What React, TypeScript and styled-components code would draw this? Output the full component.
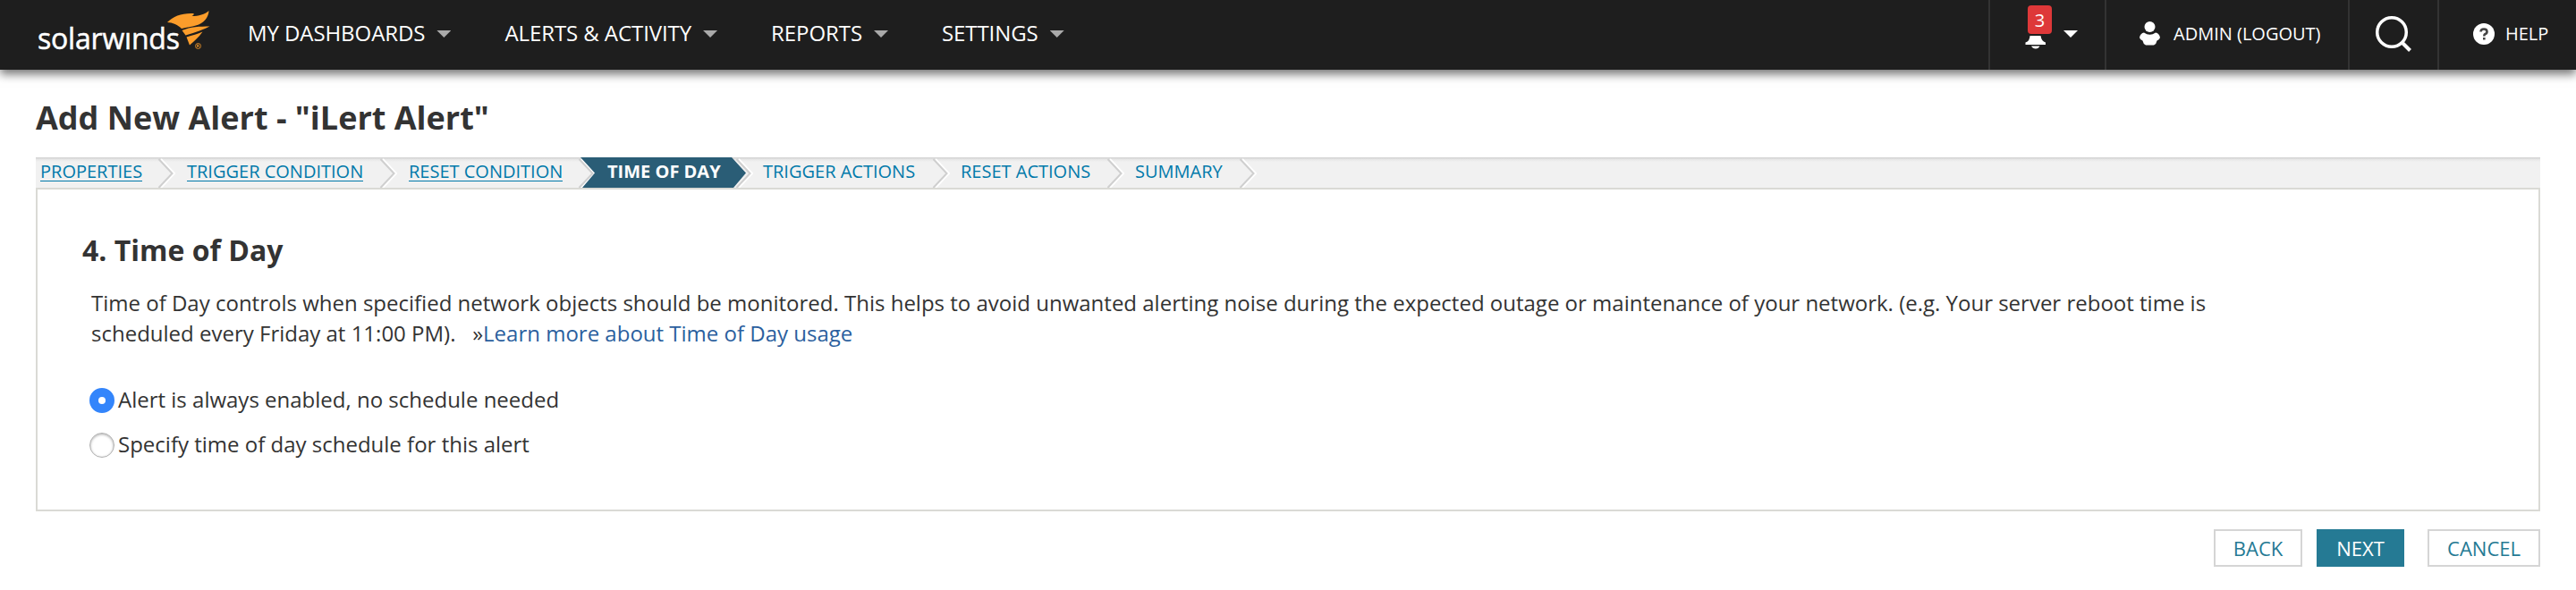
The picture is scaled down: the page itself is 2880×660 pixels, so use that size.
import React from "react";
import styled, { createGlobalStyle } from "styled-components";

const Global = createGlobalStyle`
  * { box-sizing: border-box; }
  body { margin: 0; background: #fff; font-family: "Open Sans", sans-serif; color: #333; }
`;

const Header = styled.header`
  display: flex;
  height: 78px;
  background: #1e1e1e;
  color: #fff;
  box-shadow: 0 5px 10px rgba(0, 0, 0, 0.55);
`;
const Logo = styled.div`
  display: flex;
  width: 277px;
  padding-left: 42px;
`;
const Wordmark = styled.span`
  width: 144px;
  font: 400 32px/40px "Open Sans", sans-serif;
  letter-spacing: -0.2px;
  margin-top: 23px;
  -webkit-text-stroke: 0.5px #fff;
`;
const Bird = styled.svg`
  display: block;
  width: 50px;
  height: 44px;
  margin-top: 12px;
`;
const Nav = styled.nav`
  display: flex;
  flex: 1;
  gap: 60px;
`;
const NavItem = styled.a`
  display: flex;
  align-items: flex-start;
  gap: 13px;
  font-size: 24px;
  line-height: 33px;
  letter-spacing: -0.08px;
  padding-top: 20px;
  white-space: nowrap;
`;
const Caret = styled.i<{ $color: string; $top: number }>`
  width: 16px;
  height: 8px;
  margin-top: ${(p) => p.$top}px;
  background: ${(p) => p.$color};
  clip-path: polygon(0 0, 100% 0, 50% 100%);
`;
const Tool = styled.div<{ $width: number; $left: number }>`
  display: flex;
  align-items: flex-start;
  width: ${(p) => p.$width}px;
  padding-left: ${(p) => p.$left}px;
  border-left: 2px solid #333;
`;
const ToolText = styled.span`
  font-size: 20px;
  line-height: 30px;
  margin-top: 23px;
  white-space: nowrap;
`;
const Notice = styled.div`
  display: flex;
  flex-direction: column;
  width: 30px;
  margin-right: 13px;
`;
const Badge = styled.span`
  width: 27px;
  height: 32px;
  margin: 6px 0 0 3px;
  border-radius: 4px;
  background: #de3839;
  font-size: 20px;
  line-height: 33px;
  text-align: center;
`;
const Icon = styled.svg<{ $w: number; $h: number; $top?: number; $right?: number }>`
  display: block;
  flex: none;
  width: ${(p) => p.$w}px;
  height: ${(p) => p.$h}px;
  margin-top: ${(p) => p.$top ?? 0}px;
  margin-right: ${(p) => p.$right ?? 0}px;
`;

const Main = styled.main`
  padding: 0 40px;
`;
const Title = styled.h1`
  margin: 0;
  height: 98px;
  padding-top: 29px;
  font-size: 36px;
  line-height: 50px;
  font-weight: 700;
`;
const Steps = styled.div`
  display: flex;
  height: 34px;
  background: linear-gradient(#d5d5d5 0, #d5d5d5 1px, #e6e6e6 2px, #f1f1f1 5px);
`;
const Step = styled.div<{ $width: number; $left: number }>`
  display: flex;
  justify-content: space-between;
  width: ${(p) => p.$width}px;
  padding-left: ${(p) => p.$left}px;
  font-size: 20px;
  line-height: 32px;
  white-space: nowrap;
  color: #0079aa;
`;
const ActiveStep = styled(Step)`
  margin-left: -18px;
  color: #fff;
  font-weight: 700;
  background: #2a5d76;
  clip-path: polygon(1px 0, 170px 0, 186px 17.5px, 172px 100%, 3px 100%, 17px 17.5px);
`;
const ActiveEdge = styled.div`
  margin: 0 -8px 0 -12px;
`;
const StepLink = styled.span<{ $visited?: boolean }>`
  height: 27px;
  border-bottom: ${(p) => (p.$visited ? "1px solid #0079aa" : "0")};
`;
const Panel = styled.section`
  height: 362px;
  border: 2px solid #dadad5;
  padding: 43px 50px 0;
`;
const Heading = styled.h2`
  margin: 0;
  font-size: 32px;
  line-height: 50px;
  font-weight: 700;
`;
const Copy = styled.p`
  margin: 17px 0 0 10px;
  font-size: 24px;
  line-height: 34px;
  white-space: nowrap;
`;
const Learn = styled.a`
  color: #2b5f9e;
`;
const Options = styled.div`
  display: flex;
  flex-direction: column;
  margin: 33px 0 0 8px;
`;
const Option = styled.label`
  display: flex;
  align-items: center;
  gap: 4px;
  height: 50px;
  font-size: 24px;
  white-space: nowrap;
`;
const OptionText = styled.span`
  line-height: 34px;
  padding-bottom: 2px;
`;
const Radio = styled.span<{ $on?: boolean }>`
  width: 28px;
  height: 28px;
  border-radius: 50%;
  border: ${(p) => (p.$on ? "10px solid #3385fb" : "1px solid #b0b0b0")};
  background: #fff;
  box-shadow: ${(p) => (p.$on ? "none" : "inset 0 1px 3px #aaa")};
`;
const Actions = styled.div`
  display: flex;
  justify-content: flex-end;
  margin-top: 20px;
`;
const Button = styled.button<{ $primary?: boolean; $width: number; $gap?: number }>`
  width: ${(p) => p.$width}px;
  height: 42px;
  margin: 0 0 0 ${(p) => p.$gap ?? 0}px;
  padding: 0;
  border: 2px solid ${(p) => (p.$primary ? "#257a94" : "#d5d5d5")};
  background: ${(p) => (p.$primary ? "#257a94" : "#fff")};
  color: ${(p) => (p.$primary ? "#fff" : "#257a94")};
  font: 400 22px/38px "Open Sans", sans-serif;
`;

const Chevron = () => (
  <Icon $w={20} $h={34} viewBox="0 0 20 34" fill="none">
    <path d="M4 2L19 18L4 34" stroke="#fff" strokeWidth="2" />
    <path d="M1.500 2L16.500 18L1.500 34" stroke="#cfcfcf" strokeWidth="2" />
  </Icon>
);

const menus = ["MY DASHBOARDS", "ALERTS & ACTIVITY", "REPORTS", "SETTINGS"];
const steps = [
  { name: "PROPERTIES", width: 156, left: 5, visited: true },
  { name: "TRIGGER CONDITION", width: 248, left: 13, visited: true },
  { name: "RESET CONDITION", width: 222, left: 13, visited: true },
  { name: "TIME OF DAY", width: 186, left: 31, active: true },
  { name: "TRIGGER ACTIONS", width: 228, left: 19 },
  { name: "RESET ACTIONS", width: 195, left: 12 },
  { name: "SUMMARY", width: 148, left: 12 },
];

export default function App() {
  return (
    <>
      <Global />
      <Header>
        <Logo>
          <Wordmark>solarwınds</Wordmark>
          <Bird viewBox="0 0 50 44" fill="#fc9d2b">
            <path d="M1 13C8 6 17 2.500 30 3C31.500 3.300 31 4.500 28.500 6C36 6 43 4 47.500 0C47 8 42 14 33 16.500C28 18 23 18.500 17 20C13 16 7 13 1 13Z" />
            <path d="M17.500 22C27 18 37 17.500 48.500 17.500C42 21 33 24 21.500 27.500Z" />
            <path d="M22.500 29.500C29 27.500 35 26 40.500 23.500C36 30 31 34 26 38.500Z" />
            <circle cx="35.500" cy="39.500" r="3" fill="none" stroke="#fc9d2b" strokeWidth=".8" />
            <path d="M34.500 41V38H36Q37 39 36 39.600H34.500M36 39.600L36.800 41" fill="none" stroke="#fc9d2b" strokeWidth=".7" />
          </Bird>
        </Logo>
        <Nav>
          {menus.map((m) => (
            <NavItem key={m}>
              {m}
              <Caret $color="#aaa" $top={14} />
            </NavItem>
          ))}
        </Nav>
        <Tool $width={130} $left={39}>
          <Notice>
            <Badge>3</Badge>
            <Icon $w={24} $h={16} $top={2} viewBox="0 0 24 16" fill="#fff">
              <path d="M5.500 0H17.500C18 4 20 6.500 23 7.500V10H.5V7.500C4 6.500 5 4 5.500 0ZM7 11.500H16.500Q15 14.500 12 14.500Q8.500 14.500 7 11.500Z" />
            </Icon>
          </Notice>
          <Caret $color="#fff" $top={34} />
        </Tool>
        <Tool $width={272} $left={37}>
          <Icon $w={23} $h={27} $top={24} $right={15} viewBox="0 0 23 27" fill="#fff">
            <circle cx="11.500" cy="6" r="6" />
            <path d="M5 12.500Q11.500 17 18 12.500Q22 13 23 18Q22.500 20.500 19.500 21.500Q19 25 16 26.500H7Q4 25 3.500 21.500Q.5 20.500 0 18Q1 13 5 12.500Z" />
          </Icon>
          <ToolText>ADMIN (LOGOUT)</ToolText>
        </Tool>
        <Tool $width={100} $left={28}>
          <Icon $w={42} $h={42} $top={17} viewBox="0 0 42 42" fill="none" stroke="#fff">
            <circle cx="19" cy="19" r="16.300" strokeWidth="3.500" />
            <path d="M30.500 30.500L39.500 39.500" strokeWidth="4" />
          </Icon>
        </Tool>
        <Tool $width={155} $left={38}>
          <Icon $w={24} $h={24} $top={26} $right={12} viewBox="0 0 24 24">
            <circle cx="12" cy="12" r="12" fill="#fff" />
            <path d="M8.500 9.500Q8.500 6.500 12 6.500Q15.500 6.500 15.500 9.500Q15.500 11.500 13.500 12Q12.300 12.500 12.300 14.500M12.300 16V18.500" fill="none" stroke="#444" strokeWidth="2.600" />
          </Icon>
          <ToolText>HELP</ToolText>
        </Tool>
      </Header>
      <Main>
        <Title>Add New Alert - "iLert Alert"</Title>
        <Steps>
          {steps.map((s) =>
            s.active ? (
              <React.Fragment key={s.name}>
                <ActiveStep $width={s.width} $left={s.left}>
                  <StepLink>{s.name}</StepLink>
                </ActiveStep>
                <ActiveEdge>
                  <Chevron />
                </ActiveEdge>
              </React.Fragment>
            ) : (
              <Step key={s.name} $width={s.width} $left={s.left}>
                <StepLink $visited={s.visited}>{s.name}</StepLink>
                <Chevron />
              </Step>
            )
          )}
        </Steps>
        <Panel>
          <Heading>4. Time of Day</Heading>
          <Copy>
            Time of Day controls when specified network objects should be monitored. This helps to avoid unwanted alerting noise during the expected outage or maintenance of your network. (e.g. Your server reboot time is
            <br />
            scheduled every Friday at 11:00 PM). &nbsp; »<Learn>Learn more about Time of Day usage</Learn>
          </Copy>
          <Options>
            <Option>
              <Radio $on />
              <OptionText>Alert is always enabled, no schedule needed</OptionText>
            </Option>
            <Option>
              <Radio />
              <OptionText>Specify time of day schedule for this alert</OptionText>
            </Option>
          </Options>
        </Panel>
        <Actions>
          <Button $width={99}>BACK</Button>
          <Button $width={98} $gap={16} $primary>NEXT</Button>
          <Button $width={126} $gap={26}>CANCEL</Button>
        </Actions>
      </Main>
    </>
  );
}
